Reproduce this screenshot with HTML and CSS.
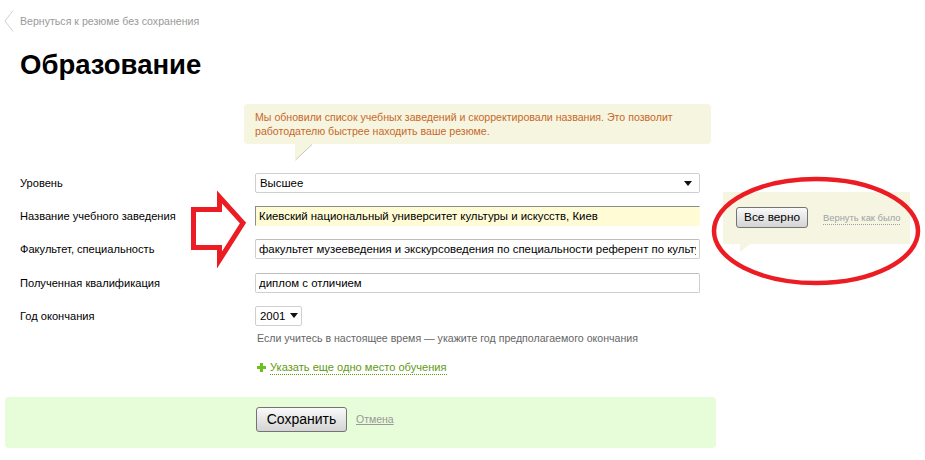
FILE: index.html
```html
<!DOCTYPE html>
<html lang="ru">
<head>
<meta charset="utf-8">
<title>Образование</title>
<link rel="stylesheet" href="styles.css">
</head>
<body>
<div class="page">
  <div class="back">
    <svg class="back-icon" width="10" height="22" viewBox="0 0 10 22"><polyline points="9,0.5 1,11 9,21.5" fill="none" stroke="#cfcfcf" stroke-width="1"/></svg>
    <a class="back-link" href="#">Вернуться к резюме без сохранения</a>
  </div>

  <h1 class="title">Образование</h1>

  <div class="notice">
    <div class="notice-box">Мы обновили список учебных заведений и скорректировали названия. Это позволит работодателю быстрее находить ваше резюме.</div>
    <svg class="notice-tail" width="18" height="17" viewBox="0 0 18 17"><polygon points="0,0 17,0 0,16" fill="#f6f5e0"/><line x1="17" y1="0.5" x2="0.5" y2="16" stroke="#c4c4bc" stroke-width="1"/></svg>
  </div>

  <div class="form">
    <div class="row">
      <div class="label">Уровень</div>
      <div class="select select-wide">
        <span>Высшее</span>
        <svg class="caret" width="8" height="5" viewBox="0 0 8 5"><polygon points="0,0 8,0 4,5" fill="#111"/></svg>
      </div>
    </div>
    <div class="row">
      <div class="label">Название учебного заведения</div>
      <input class="field field-hl" type="text" value="Киевский национальный университет культуры и искусств, Киев">
      <div class="confirm">
        <button class="btn btn-small" type="button">Все верно</button>
        <a class="dotted-gray" href="#">Вернуть как было</a>
      </div>
    </div>
    <div class="row">
      <div class="label">Факультет, специальность</div>
      <input class="field" type="text" value="факультет музееведения и экскурсоведения по специальности референт по культурологии">
    </div>
    <div class="row">
      <div class="label">Полученная квалификация</div>
      <input class="field" type="text" value="диплом с отличием">
    </div>
    <div class="row">
      <div class="label">Год окончания</div>
      <div class="select select-year">
        <span>2001</span>
        <svg class="caret" width="8" height="5" viewBox="0 0 8 5"><polygon points="0,0 8,0 4,5" fill="#111"/></svg>
      </div>
    </div>
    <div class="hint">Если учитесь в настоящее время — укажите год предполагаемого окончания</div>
    <div class="add">
      <svg class="plus" width="9" height="9" viewBox="0 0 9 9"><rect x="3" y="0" width="3" height="9" fill="#6fbf1e"/><rect x="0" y="3" width="9" height="3" fill="#6fbf1e"/></svg>
      <a class="add-link" href="#">Указать еще одно место обучения</a>
    </div>
  </div>

  <div class="footer">
    <button class="btn btn-save" type="button">Сохранить</button>
    <a class="cancel" href="#">Отмена</a>
  </div>

  <svg class="annot" width="925" height="460" viewBox="0 0 925 460">
    <polygon points="193.5,199.5 219.5,199.5 219.5,187 243,213 219.5,250 219.5,237.5 193.5,237.5" fill="none" stroke="#ec1c24" stroke-width="5"/>
    <ellipse cx="816" cy="221" rx="102" ry="52" fill="none" stroke="#ec1c24" stroke-width="4.5"/>
  </svg>
</div>
</body>
</html>
```

FILE: styles.css
```css
* { box-sizing: border-box; }
html, body { margin: 0; padding: 0; background: #fff; }
body {
  font-family: "Liberation Sans", Arial, sans-serif;
  color: #000;
  width: 925px;
  height: 460px;
  overflow: hidden;
}
.page { position: relative; width: 925px; height: 460px; }

.back {
  display: flex;
  align-items: center;
  height: 22px;
  margin-top: 10px;
  padding-left: 4px;
}
.back-icon { display: block; }
.back-link {
  margin-left: 6px;
  font-size: 10.6px;
  line-height: 14px;
  color: #999;
  text-decoration: none;
}

.title {
  margin: 18px 0 0 20px;
  font-size: 27.5px;
  line-height: 30px;
  font-weight: bold;
}

.notice { margin: 24px 0 0 244px; width: 467px; }
.notice-box {
  background: #f6f5e0;
  border-radius: 4px;
  height: 40px;
  padding: 6px 12px 0 11px;
  font-size: 10.6px;
  line-height: 14px;
  color: #c8682a;
}
.notice-tail { display: block; margin-left: 51px; }

.form { margin-top: 12px; padding-left: 20px; }
.row {
  display: flex;
  align-items: center;
  height: 20px;
  margin-bottom: 13.2px;
}
.label {
  width: 235px;
  flex: none;
  font-size: 11.1px;
  line-height: 14px;
}
.select {
  display: flex;
  align-items: center;
  justify-content: space-between;
  height: 20px;
  border: 1px solid #cfcfcf;
  border-radius: 2px;
  background: #fff;
  padding: 0 7px 0 4px;
  font-size: 11.4px;
}
.select-wide { width: 445px; }
.select-year { width: 47px; padding-right: 3px; }
.caret { display: block; }

.field {
  width: 445px;
  height: 20px;
  flex: none;
  margin: 0;
  border: 1px solid #cfcfcf;
  border-top-color: #bdbdbd;
  border-radius: 2px;
  padding: 0 3px;
  font-family: "Liberation Sans", Arial, sans-serif;
  font-size: 11.4px;
  color: #000;
  background: #fff;
  outline: none;
}
.field-hl {
  background: #fffcd5;
  border-color: #8c8c8c #fffcd5 #fffcd5 #8c8c8c;
  border-radius: 0;
}

.confirm {
  position: relative;
  flex: none;
  width: 187px;
  height: 52px;
  margin: 4px 0 0 23px;
  background: #f6f5e1;
  display: flex;
  align-items: center;
  padding-left: 13px;
}
.confirm::after {
  content: "";
  position: absolute;
  left: 17px;
  top: 52px;
  border-style: solid;
  border-width: 8px 10px 0 0;
  border-color: #f6f5e1 transparent transparent transparent;
}
.btn {
  font-family: "Liberation Sans", Arial, sans-serif;
  color: #000;
  border: 1px solid #747474;
  border-radius: 3px;
  background: linear-gradient(#fafafa, #e6e6e6 50%, #d4d4d4);
  padding: 0;
  margin: 0;
}
.btn-small {
  width: 72px;
  height: 21px;
  font-size: 11.8px;
  margin-top: -2px;
}
.dotted-gray {
  margin-left: 15px;
  font-size: 9.4px;
  line-height: 12px;
  color: #9aa3a8;
  text-decoration: none;
  border-bottom: 1px dotted #9aa3a8;
}

.hint {
  margin: -8px 0 0 237px;
  font-size: 10.6px;
  line-height: 14px;
  color: #666;
}
.add {
  display: flex;
  align-items: center;
  margin: 16px 0 0 237px;
  height: 14px;
}
.plus { display: block; margin-right: 4px; }
.add-link {
  font-size: 11.1px;
  line-height: 14px;
  color: #5f9a12;
  text-decoration: none;
  border-bottom: 1px dotted #5f9a12;
}

.footer {
  margin: 22px 0 0 5px;
  width: 711px;
  height: 51px;
  background: #e7fcd8;
  border-radius: 4px;
  display: flex;
  align-items: flex-start;
  padding: 10px 0 0 251px;
}
.btn-save {
  width: 91px;
  height: 25px;
  font-size: 14px;
}
.cancel {
  margin: 6px 0 0 9px;
  font-size: 10.5px;
  line-height: 13px;
  color: #999;
  text-decoration: underline;
}

.annot {
  position: absolute;
  top: 0;
  left: 0;
  pointer-events: none;
}
```
